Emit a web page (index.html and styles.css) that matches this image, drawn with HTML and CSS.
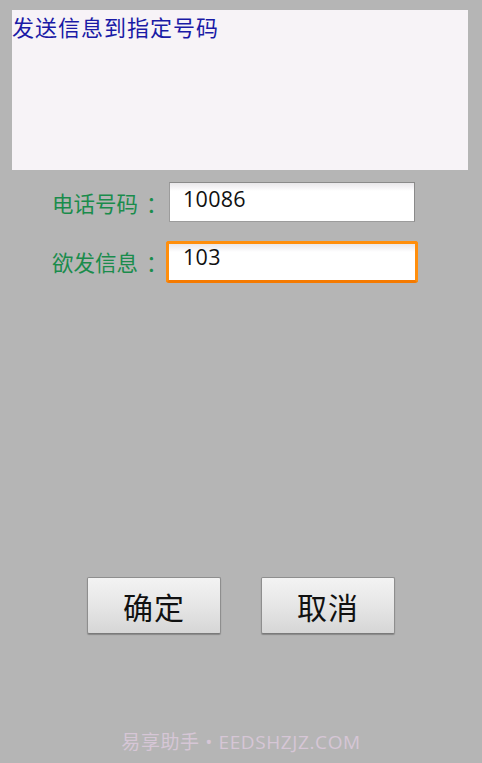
FILE: index.html
```html
<!DOCTYPE html>
<html lang="zh-CN">
<head>
<meta charset="utf-8">
<title>发送信息</title>
<link rel="stylesheet" href="styles.css">
</head>
<body>
<div class="page">
  <div class="message-box">发送信息到指定号码</div>
  <div class="form">
    <div class="row row-phone">
      <label class="label">电话号码<span class="colon">：</span></label>
      <div class="field">
        <div class="input">10086</div>
      </div>
    </div>
    <div class="row row-msg">
      <label class="label">欲发信息<span class="colon">：</span></label>
      <div class="field">
        <div class="input input-focused">103</div>
      </div>
    </div>
  </div>
  <div class="actions">
    <button class="btn">确定</button>
    <button class="btn">取消</button>
  </div>
  <div class="watermark">易享助手 • EEDSHZJZ.COM</div>
</div>
</body>
</html>
```

FILE: styles.css
```css
html, body {
  margin: 0;
  padding: 0;
  background: #b5b5b5;
}

.page {
  width: 482px;
  height: 763px;
  padding-top: 10px;
  box-sizing: border-box;
  font-family: "Noto Sans CJK SC", "Open Sans", sans-serif;
}

.message-box {
  margin-left: 12px;
  width: 456px;
  height: 160px;
  background: #f7f3f7;
  color: #1a1aa6;
  font-size: 22px;
  line-height: 32px;
  letter-spacing: 1px;
}

.form {
  display: flex;
  flex-direction: column;
  gap: 18px;
  margin-top: 11px;
}

.row {
  display: flex;
  align-items: center;
  padding-left: 52px;
}

.label {
  width: 114px;
  flex: none;
  white-space: nowrap;
  color: #1a8c4c;
  font-size: 21.5px;
  line-height: 30px;
}

.colon {
  margin-left: 8px;
}

.row-phone .label {
  position: relative;
  top: 1px;
}

.field {
  width: 252px;
  height: 42px;
  box-sizing: border-box;
  display: flex;
}

.input {
  box-sizing: border-box;
  font-family: "Open Sans", "Noto Sans CJK SC", sans-serif;
  font-size: 21.5px;
  letter-spacing: 0.3px;
  color: #111;
  background: linear-gradient(#e9e7ea 0px, #f6f5f7 5px, #ffffff 8px);
}

.row-phone .input {
  margin: 1px 3px 1px 3px;
  width: 246px;
  height: 40px;
  border: 1px solid #9c9c9c;
  border-top-color: #8a8a8a;
  border-right-color: #8a8a8a;
  padding: 2px 0 0 13px;
  line-height: 28px;
}

.input-focused {
  width: 252px;
  height: 42px;
  border: 3px solid #ff8e0c;
  border-bottom-color: #f57a00;
  border-radius: 3px;
  padding: 0 0 0 14px;
  line-height: 26px;
}

.actions {
  display: flex;
  justify-content: center;
  gap: 40px;
  margin-top: 294px;
}

.btn {
  width: 134px;
  height: 57px;
  margin: 0;
  padding: 0;
  border: 1px solid #8e8e8e;
  border-bottom-color: #7a7a7a;
  border-radius: 2px;
  background: linear-gradient(#f3f3f3 0%, #e6e6e6 50%, #d6d6d6 100%);
  box-shadow: 0 1px 1px rgba(0, 0, 0, 0.25);
  font-family: "Noto Sans CJK SC", sans-serif;
  font-size: 30px;
  line-height: 40px;
  color: #111;
  letter-spacing: 1px;
}

.watermark {
  margin-top: 96px;
  text-align: center;
  font-family: "Open Sans", "Noto Sans CJK SC", sans-serif;
  font-size: 19px;
  letter-spacing: 0.6px;
  line-height: 24px;
  color: #d6c6d6;
}
```
